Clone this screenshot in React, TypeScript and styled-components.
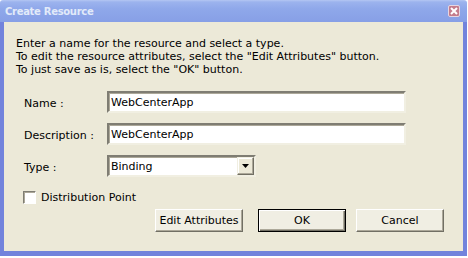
import styled, { createGlobalStyle } from "styled-components";

const GlobalStyle = createGlobalStyle`
  html, body {
    margin: 0;
    padding: 0;
    background: #ffffff;
  }
  body {
    font-family: "DejaVu Sans", "Liberation Sans", sans-serif;
    font-size: 11px;
    color: #000000;
  }
`;

export default function App() {
  return (
    <>
      <GlobalStyle />
      <Window>
        <TitleBar>
          <TitleText>Create Resource</TitleText>
          <CloseButton aria-label="Close">
            <svg width="8" height="8" viewBox="0 0 8 8">
              <path d="M1 1 L7 7 M7 1 L1 7" stroke="#ffffff" strokeWidth="2" />
            </svg>
          </CloseButton>
        </TitleBar>
        <Frame>
          <Body>
            <Intro>
              <p>Enter a name for the resource and select a type.</p>
              <p>To edit the resource attributes, select the "Edit Attributes" button.</p>
              <p>To just save as is, select the "OK" button.</p>
            </Intro>

            <FormGrid>
              <FieldLabel>Name :</FieldLabel>
              <TextInput defaultValue="WebCenterApp" />
              <FieldLabel>Description :</FieldLabel>
              <TextInput defaultValue="WebCenterApp" />
              <FieldLabel>Type :</FieldLabel>
              <Combo>
                <ComboValue>Binding</ComboValue>
                <ComboArrow>
                  <svg width="7" height="4" viewBox="0 0 7 4">
                    <path d="M0 0 H7 L3.5 4 Z" fill="#000000" />
                  </svg>
                </ComboArrow>
              </Combo>
            </FormGrid>

            <CheckRow>
              <CheckBox />
              <span>Distribution Point</span>
            </CheckRow>

            <ButtonRow>
              <DialogButton $gap={15}>Edit Attributes</DialogButton>
              <DialogButton $gap={10} $default>OK</DialogButton>
              <DialogButton>Cancel</DialogButton>
            </ButtonRow>
          </Body>
        </Frame>
      </Window>
    </>
  );
}

const Window = styled.div`
  display: flex;
  flex-direction: column;
  width: 467px;
  height: 256px;
`;

const TitleBar = styled.div`
  display: flex;
  align-items: center;
  justify-content: space-between;
  height: 22px;
  padding: 0 7px 0 5px;
  box-sizing: border-box;
  border-radius: 3px 3px 0 0;
  background: linear-gradient(#b4c6f3 0, #9cb3ee 2px, #8fa8ea 40%, #879fe6 100%);
`;

const TitleText = styled.span`
  color: #e2eaf9;
  font-family: "DejaVu Sans", sans-serif;
  font-size: 10px;
  font-weight: bold;
  letter-spacing: -0.3px;
`;

const CloseButton = styled.div`
  display: flex;
  align-items: center;
  justify-content: center;
  width: 12px;
  height: 12px;
  box-sizing: border-box;
  border: 1px solid #e6d6e2;
  border-radius: 2px;
  background: #c47c8c;
`;

const Frame = styled.div`
  flex: 1;
  display: flex;
  border-style: solid;
  border-color: #7283dc;
  border-width: 0 4px 5px 4px;
`;

const Body = styled.div`
  flex: 1;
  display: flex;
  flex-direction: column;
  background: #ece9d8;
  padding: 15px 19px 0 12px;
`;

const Intro = styled.div`
  line-height: 13px;

  p {
    margin: 0;
  }
`;

const FormGrid = styled.div`
  display: grid;
  grid-template-columns: 83px 299px;
  grid-auto-rows: 22px;
  row-gap: 10px;
  align-items: center;
  margin: 15px 0 0 8px;
`;

const FieldLabel = styled.span`
  padding-top: 2px;
`;

const sunken = `
  box-sizing: border-box;
  border-style: solid;
  border-width: 2px;
  border-color: #7f7d73 #f1efe2 #f1efe2 #7f7d73;
  box-shadow: inset 1px 1px 0 #aca899;
  background: #ffffff;
`;

const TextInput = styled.input`
  ${sunken}
  width: 299px;
  height: 22px;
  padding: 0 2px;
  font: inherit;
  color: #000000;
  outline: none;
`;

const Combo = styled.div`
  ${sunken}
  display: flex;
  align-items: center;
  justify-content: space-between;
  width: 149px;
  height: 22px;
  padding-left: 2px;
`;

const ComboValue = styled.span``;

const ComboArrow = styled.div`
  display: flex;
  align-items: center;
  justify-content: center;
  width: 17px;
  height: 18px;
  box-sizing: border-box;
  border-style: solid;
  border-width: 1px;
  border-color: #f1efe2 #716f64 #716f64 #f1efe2;
  box-shadow: inset -1px -1px 0 #aca899, inset 1px 1px 0 #ffffff;
  background: #ece9d8;
`;

const CheckRow = styled.label`
  display: flex;
  align-items: center;
  gap: 5px;
  margin: 14px 0 0 7px;
`;

const CheckBox = styled.span`
  width: 13px;
  height: 13px;
  box-sizing: border-box;
  border-style: solid;
  border-width: 1px;
  border-color: #7f7d73 #ffffff #ffffff #7f7d73;
  box-shadow: inset 1px 1px 0 #aca899;
  background: #ffffff;
`;

const ButtonRow = styled.div`
  display: flex;
  justify-content: flex-end;
  margin-top: 5px;
`;

const DialogButton = styled.button<{ $gap?: number; $default?: boolean }>`
  width: 88px;
  height: 23px;
  margin-right: ${(p) => p.$gap ?? 0}px;
  padding: 0;
  box-sizing: border-box;
  font: inherit;
  color: #000000;
  background: #f0eee3;
  border-style: solid;
  border-width: 1px;
  border-color: ${(p) => (p.$default ? "#000000" : "#ffffff #716f64 #716f64 #ffffff")};
  box-shadow: ${(p) =>
    p.$default
      ? "inset 1px 1px 0 #ffffff, inset -1px -1px 0 #716f64, inset -2px -2px 0 #aca899"
      : "inset -1px -1px 0 #aca899"};
`;
